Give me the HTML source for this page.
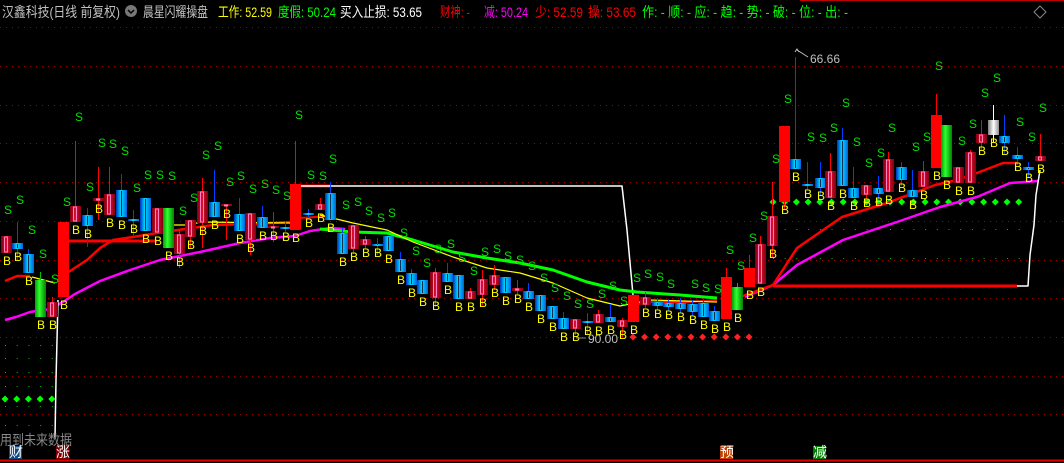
<!DOCTYPE html>
<html><head><meta charset="utf-8"><style>
html,body{margin:0;padding:0;background:#000;width:1064px;height:463px;overflow:hidden}
svg{display:block}
.h{font-family:"Liberation Sans","Noto Sans CJK SC",sans-serif;font-size:14px}
.l{font-family:"Liberation Sans",sans-serif;font-size:12px}
</style></head><body>
<svg id="s" width="1064" height="463" xmlns="http://www.w3.org/2000/svg">
<defs>
<linearGradient id="gb" x1="0" x2="1"><stop offset="0" stop-color="#0030c0"/><stop offset=".45" stop-color="#00e0ff"/><stop offset="1" stop-color="#0060e0"/></linearGradient>
<linearGradient id="gr" x1="0" x2="1"><stop offset="0" stop-color="#800010"/><stop offset=".5" stop-color="#e01030"/><stop offset="1" stop-color="#800010"/></linearGradient>
<linearGradient id="gg" x1="0" x2="1"><stop offset="0" stop-color="#00a000"/><stop offset=".4" stop-color="#30ff30"/><stop offset="1" stop-color="#008000"/></linearGradient>
<linearGradient id="gw" x1="0" x2="1"><stop offset="0" stop-color="#808080"/><stop offset=".5" stop-color="#ffffff"/><stop offset="1" stop-color="#909090"/></linearGradient>
</defs>
<rect width="1064" height="463" fill="#000"/>
<g id="grid" stroke="#a00000" stroke-width="1" stroke-dasharray="1,5"></g>
<g id="dots"></g>
<g id="lines" fill="none" stroke-linejoin="round"></g>
<g id="c"></g>
<g id="lab" class="l"></g>
<text class="h" x="2" y="17" fill="#c0c0c0" textLength="118" lengthAdjust="spacingAndGlyphs">汉鑫科技(日线 前复权)</text>
<circle cx="131" cy="11" r="6" fill="#777"/><path d="M128 10l3 3 3-3" stroke="#000" stroke-width="1.5" fill="none"/>
<text class="h" x="143" y="17" fill="#c0c0c0" textLength="65" lengthAdjust="spacingAndGlyphs">晨星闪耀操盘</text>
<text class="h" x="218" y="17" fill="#ffff00" textLength="54" lengthAdjust="spacingAndGlyphs">工作: 52.59</text>
<text class="h" x="278" y="17" fill="#00ff00" textLength="58" lengthAdjust="spacingAndGlyphs">度假: 50.24</text>
<text class="h" x="340" y="17" fill="#ffffff" textLength="82" lengthAdjust="spacingAndGlyphs">买入止损: 53.65</text>
<text class="h" x="440" y="17" fill="#ff0000" textLength="30" lengthAdjust="spacingAndGlyphs">财神: -</text>
<text class="h" x="484" y="17" fill="#ff00ff" textLength="44" lengthAdjust="spacingAndGlyphs">减: 50.24</text>
<text class="h" x="535" y="17" fill="#ff0000" textLength="48" lengthAdjust="spacingAndGlyphs">少: 52.59</text>
<text class="h" x="588" y="17" fill="#ff0000" textLength="48" lengthAdjust="spacingAndGlyphs">操: 53.65</text>
<text class="h" x="642" y="17" fill="#00ff00" textLength="206" lengthAdjust="spacingAndGlyphs">作: - 顺: - 应: - 趋: - 势: - 破: - 位: - 出: -</text>
<line x1="800" y1="0.5" x2="1064" y2="0.5" stroke="#c00000"/>
<path d="M1040 6l6 6-6 6-6-6z" stroke="#888" fill="none"/>
<text class="l" x="810" y="63" fill="#c0c0c0" font-size="12">66.66</text>
<path d="M795 52l2-3 2 3 M797 50 L808 57" stroke="#c0c0c0" fill="none"/>
<text class="l" x="588" y="343" fill="#c0c0c0" font-size="13">90.00</text>
<line x1="576" y1="338" x2="586" y2="338" stroke="#888"/>
<text class="h" x="0" y="445" fill="#888" textLength="72" lengthAdjust="spacingAndGlyphs">用到未来数据</text>
<line x1="0" y1="460.5" x2="1064" y2="460.5" stroke="#e00000" stroke-width="2"/>
<rect x="9" y="446" width="13" height="13" fill="#104880"/><text class="h" x="9" y="457" fill="#fff" font-size="12">财</text>
<rect x="56" y="446" width="13" height="13" fill="#800000"/><text class="h" x="56" y="457" fill="#fff" font-size="12">涨</text>
<rect x="720" y="446" width="13" height="13" fill="#c04000"/><text class="h" x="720" y="457" fill="#fff" font-size="12">预</text>
<rect x="813" y="446" width="13" height="13" fill="#008000"/><text class="h" x="813" y="457" fill="#fff" font-size="12">减</text>
</svg>
<script>
var NS="http://www.w3.org/2000/svg";
function el(p,t,a,txt){var e=document.createElementNS(NS,t);for(var k in a)e.setAttribute(k,a[k]);if(txt)e.textContent=txt;document.getElementById(p).appendChild(e);return e;}
[27,66,105,143,182,221,260,298,337,376,414].forEach(function(y){el("grid","line",{x1:0,y1:y+.5,x2:1064,y2:y+.5});});
var C=[[6,236,253,236,253,'r'],[17,243,249,222,260,'b'],[28,254,273,249,273,'b'],[40,280,317,272,317,'g'],[52,302,317,297,317,'r'],[63,222,297,222,297,'R'],[75,206,222,141,222,'r'],[87,215,226,208,247,'b'],[98,198,201,167,220,'r'],[109,194,215,167,215,'r'],[121,190,217,174,217,'b'],[133,219,221,210,237,'b'],[145,198,231,198,231,'b'],[157,208,233,208,233,'r'],[168,208,248,208,248,'g'],[179,234,254,231,268,'r'],[190,220,237,220,248,'r'],[202,191,223,178,248,'r'],[214,202,217,170,217,'b'],[226,204,206,204,240,'r'],[239,214,231,198,231,'b'],[250,213,240,213,255,'r'],[262,217,228,206,228,'b'],[273,226,228,212,242,'r'],[285,227,229,222,232,'b'],[295,184,230,141,230,'R'],[308,213,215,209,218,'b'],[320,204,210,198,210,'r'],[330,193,220,182,220,'b'],
[342,233,254,228,254,'b'],[353,225,249,225,254,'r'],[365,239,245,236,249,'r'],[377,244,245,238,255,'b'],[388,236,251,236,251,'b'],[400,259,272,252,272,'b'],[411,273,285,269,285,'b'],[422,280,294,280,294,'b'],[435,272,298,268,307,'r'],[447,273,282,263,282,'b'],[458,275,299,275,299,'b'],[470,291,299,288,299,'r'],[482,279,295,270,305,'r'],[494,275,285,265,290,'r'],[505,277,293,277,293,'b'],[517,288,291,280,295,'r'],[528,291,299,283,299,'b'],[540,295,311,295,311,'b'],[552,306,319,306,319,'b'],[563,318,329,312,329,'b'],[575,319,329,319,335,'r'],[587,321,323,313,335,'b'],[598,314,323,310,323,'r'],[610,317,322,304,322,'b'],[622,320,327,318,337,'r'],[633,295,322,295,322,'R'],
[645,297,305,292,308,'r'],[657,302,306,298,310,'b'],[668,303,307,299,311,'b'],[680,303,309,298,313,'b'],[692,304,312,300,316,'b'],[703,303,317,298,317,'b'],[714,311,321,306,321,'b'],[726,277,319,268,319,'R'],[737,287,310,283,310,'g'],[749,268,287,255,287,'R'],[760,244,284,236,284,'r'],[772,216,246,182,258,'r'],[784,126,202,126,210,'R'],[795,159,169,57,169,'b'],[807,184,186,162,190,'b'],[820,178,188,162,195,'b'],[830,171,198,153,198,'r'],[842,140,186,128,186,'b'],[853,188,198,167,198,'b'],[866,185,195,185,200,'r'],[878,188,194,176,200,'b'],[888,159,192,152,192,'r'],[901,167,180,162,186,'b'],[912,190,197,170,197,'b'],[923,171,187,161,187,'r'],[936,115,168,94,168,'R'],[946,125,177,125,177,'g'],[958,167,183,167,183,'r'],[970,152,183,150,183,'r'],[981,134,143,120,150,'r'],[993,120,135,105,143,'w'],[1004,136,143,115,155,'b'],[1017,155,159,147,165,'b'],[1028,167,170,162,178,'b'],[1040,156,161,134,161,'r']];
C.forEach(function(c){var x=c[0],t=c[1],b=c[2],col=c[5];
 var wc={b:'#0040ff',r:'#ff0000',R:'#ff0000',g:'#00c000',w:'#ffffff'}[col];
 el("c","line",{x1:x+.5,y1:c[3],x2:x+.5,y2:c[4],stroke:wc});
 var h=Math.max(b-t,2);
 if(col=='R'){el("c","rect",{x:x-5,y:t,width:11,height:h,fill:'#ff0000'});}
 else{el("c","rect",{x:x-5,y:t,width:11,height:h,fill:'url(#g'+col+')'});
  if(col=='r')el("c","rect",{x:x-1.5,y:t+1,width:3,height:Math.max(h-2,1),fill:'none',stroke:'#ff80c0','stroke-width':1});
  if(col=='b')el("c","line",{x1:x+.5,y1:t+1,x2:x+.5,y2:b-1,stroke:'#003050'});}
 el("lab","text",{x:x-3,y:b+12,fill:'#ffff00'},'B');
});
var S=[[8,209],[20,199],[32,229],[43,253],[55,278],[67,201],[79,116],[90,186],[102,142],[113,143],[125,150],[137,187],[148,174],[160,174],[172,175],[183,210],[194,197],[206,154],[218,145],[230,181],[241,175],[253,188],[265,183],[276,189],[287,195],[299,114],[311,174],[323,175],[333,158],[346,204],[358,201],[369,210],[381,217],[392,212],[404,232],[416,250],[427,262],[438,248],[451,243],[462,257],[474,270],[485,251],[497,248],[508,255],[520,259],[532,265],[544,277],[555,287],[567,295],[578,303],[590,303],[602,293],[613,285],[624,300],[637,277],[648,273],[660,276],[671,283],[695,283],[706,287],[718,288],[730,249],[741,265],[753,237],[764,215],[776,158],[788,98],[811,136],[823,137],[834,127],[846,102],[857,141],[869,162],[881,152],[892,127],[916,146],[927,136],[939,65],[962,140],[973,123],[985,92],[997,77],[1020,121],[1032,136],[1043,107]];
S.forEach(function(s){el("lab","text",{x:s[0]-4,y:s[1]+5,fill:'#00e000'},'S');});
function pl(pts,col,w){el("lines","polyline",{points:pts,stroke:col,'stroke-width':w});}
pl("5,320 16,317 30,312 50,309 63,302 75,294 100,281 130,270 160,260 200,252 240,243 270,238 295,236 310,231 330,228 345,229","#ff00ff",2.5);
pl("745,297 773,285 797,265 843,240 897,222 940,207 977,197 1010,183 1038,181","#ff00ff",2.5);
pl("5,281 17,276 30,276","#ff0000",2.5);
pl("67,273 87,260 100,248 113,240 133,237 157,233 192,228 213,225 253,224 290,222","#ff0000",2.5);
pl("67,241 157,241","#ff0000",3);pl("300,186 330,186","#ff0000",3);pl("300,218 330,216","#ff0000",2);
pl("740,297 773,285 797,248 842,217 887,203 935,185 957,180 977,173 1003,163 1017,163","#ff0000",2.5);
pl("773,286 1017,286","#ff0000",3);pl("633,305 650,302 690,302 717,300","#ff0000",2);
pl("1017,286 1028,286 1030,255 1034,225 1036,195 1040,170","#ffffff",1.5);
pl("300,186 622,186 627,230 633,295","#ffffff",1.5);
pl("55,438 56,380 58,300","#ffffff",1.5);pl("173,225 190,225 200,222 290,223","#ffff00",1.2);
pl("320,229 353,232 387,233 413,240 453,252 487,258 520,263 553,270 587,282 620,290 637,292 680,295 717,298","#00ff00",3);
pl("320,215 353,223 387,230 413,242 453,257 487,268 520,273 553,283 587,298 620,306 650,300 717,302","#ffff00",1.2);
pl("32,277 55,283","#ffff00",1.2);
function dia(x,y,c){el("dots","path",{d:"M"+x+" "+(y-3.5)+"l3.5 3.5-3.5 3.5-3.5-3.5z",fill:c});}
for(var x=773;x<=1030;x+=11.7)dia(x,202,'#00ff00');
for(var x=633;x<=750;x+=11.6)dia(x,337,'#ff2020');
for(var x=5;x<=52;x+=11.7)dia(x,399,'#00ff00');
[345,358,372,386,406,425].forEach(function(y){for(var x=5;x<=52;x+=11.7)el("dots","rect",{x:x,y:y,width:1,height:1,fill:'#00c000'});});
[229,258].forEach(function(y){for(var x=773;x<=1030;x+=11.7)el("dots","rect",{x:x,y:y,width:1,height:1,fill:'#00c000'});});
</script>
</body></html>
